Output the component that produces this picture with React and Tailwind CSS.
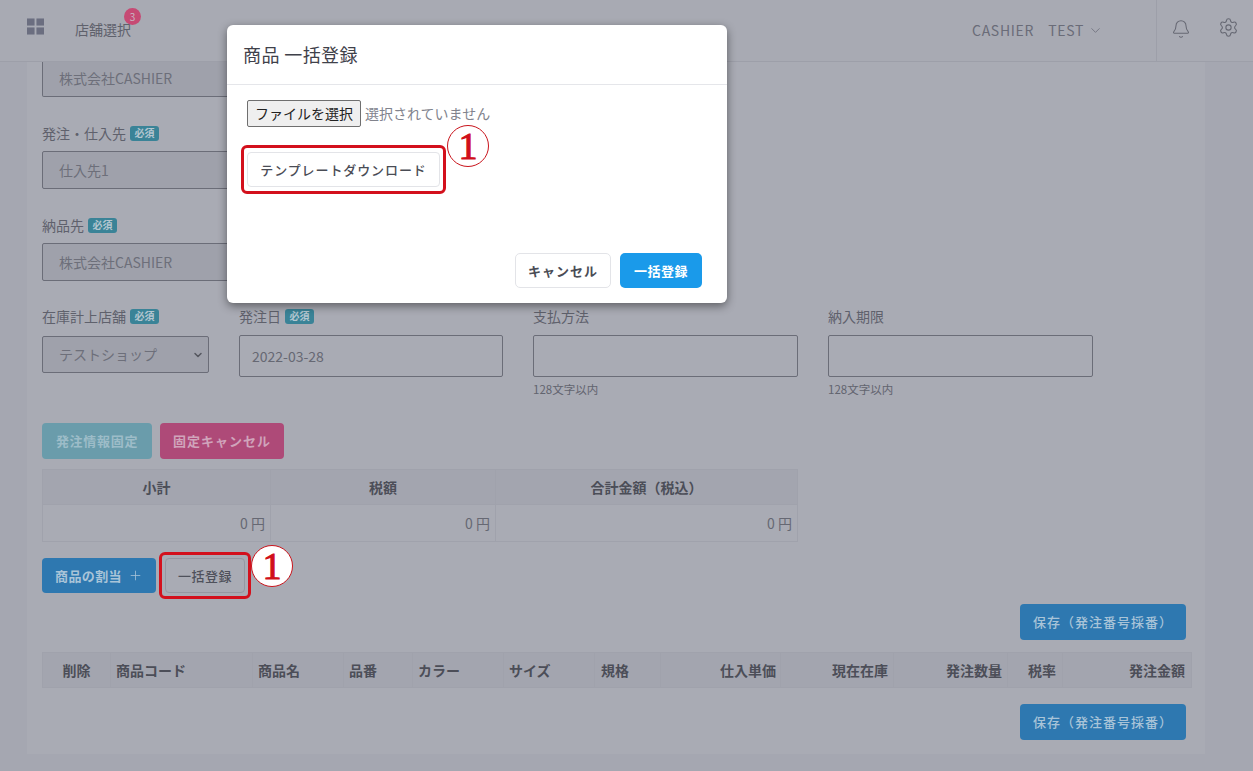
import React from 'react';
import { Bell, ChevronDown, Plus, Settings } from 'lucide-react';

const FONT = { fontFamily: '"Noto Sans CJK JP", "Noto Sans", sans-serif' };

const ORDER_COLUMNS = [
  { label: '削除', width: 'w-[68px]', align: 'text-center' },
  { label: '商品コード', width: 'w-[142px]', align: 'text-left' },
  { label: '商品名', width: 'w-[91px]', align: 'text-left' },
  { label: '品番', width: 'w-[69px]', align: 'text-left' },
  { label: 'カラー', width: 'w-[91px]', align: 'text-left' },
  { label: 'サイズ', width: 'w-[91px]', align: 'text-left' },
  { label: '規格', width: 'w-[66px]', align: 'text-left pl-[6px]' },
  { label: '仕入単価', width: 'w-[120px]', align: 'text-right pr-[4px]' },
  { label: '現在在庫', width: 'w-[113px]', align: 'text-right' },
  { label: '発注数量', width: 'w-[114px]', align: 'text-right' },
  { label: '税率', width: 'w-[55px]', align: 'text-left pl-[20px]' },
  { label: '発注金額', width: 'w-[129px]', align: 'text-right pr-[6px]' },
];

function Required() {
  return (
    <span className="ml-[4px] inline-flex h-[15px] w-[29px] items-center justify-center rounded-[3px] bg-[#3a8397] text-[10px] font-bold leading-none text-[#b4c6d0]">
      必須
    </span>
  );
}

function FieldLabel({ children, required }) {
  return (
    <div className="flex h-[20px] items-center text-[14px] leading-[20px] text-[#5f616c]">
      {children}
      {required && <Required />}
    </div>
  );
}

function LockedInput({ value, className = '' }) {
  return (
    <div className={`flex w-[420px] items-center rounded-[2px] border border-[#6b6d78] bg-[#9fa1ab] pl-[16px] text-[14px] text-[#6d6f7a] ${className}`}>
      {value}
    </div>
  );
}

function TextField({ label, required, value, hint, className = 'w-[265px]' }) {
  return (
    <div className={className}>
      <FieldLabel required={required}>{label}</FieldLabel>
      <div className="mt-[9px] flex h-[42px] items-center rounded-[2px] border border-[#6b6d78] pl-[12px] text-[14px] text-[#666873]">
        {value}
      </div>
      {hint && <div className="mt-[4px] text-[11.5px] leading-[16px] text-[#62646f]">{hint}</div>}
    </div>
  );
}

function SaveButton({ className = '' }) {
  return (
    <button className={`ml-auto mr-[19px] block h-[36px] w-[166px] rounded-[4px] bg-[#2e78b0] text-[13px] font-medium tracking-[1px] text-[#a9c4d8] ${className}`}>
      保存（発注番号採番）
    </button>
  );
}

// Numbered callout next to the highlighted controls
function StepMark({ className = '' }) {
  return (
    <div
      className={`absolute flex h-[42px] w-[42px] items-center justify-center rounded-full border-[1.5px] border-[#c9141c] bg-white text-[38px] leading-none text-[#d0101a] [-webkit-text-stroke:1px_#d0101a] ${className}`}
      style={{ fontFamily: '"Liberation Serif", serif' }}
    >
      1
    </div>
  );
}

function GridIcon() {
  return (
    <svg className="mb-[9px] ml-[1px] h-[17px] w-[17px]" viewBox="0 0 18 17" fill="#6b6e80">
      <rect x="0" y="0" width="8" height="7.5" />
      <rect x="10" y="0" width="8" height="7.5" />
      <rect x="0" y="9.5" width="8" height="7.5" />
      <rect x="10" y="9.5" width="8" height="7.5" />
    </svg>
  );
}

function BulkModal() {
  return (
    <div className="absolute left-[227px] top-[25px] h-[278px] w-[500px] rounded-[6px] bg-white shadow-[0_3px_10px_rgba(0,0,0,0.45)]">
      <div className="flex h-[60px] items-center border-b border-[#e5e6ea] pl-[16px] text-[18px] tracking-[0.4px] text-[#3f414a]">
        商品 一括登録
      </div>
      <div className="relative pl-[20px] pt-[15px]">
        <div className="flex items-center">
          <div className="flex h-[27px] w-[114px] items-center justify-center rounded-[2px] border border-[#6f6f6f] bg-[#efefef] text-[14px] text-[#222222]">
            ファイルを選択
          </div>
          <span className="ml-[4px] text-[14px] text-[#81838d]">選択されていません</span>
        </div>
        <div className="ml-[-6px] mt-[18px] flex h-[49px] w-[205px] items-center justify-center rounded-[6px] border-[3px] border-[#d3101c]">
          <button className="h-[35px] w-[193px] rounded-[4px] border border-[#e3e4e8] bg-white text-[13px] font-medium tracking-[0.9px] text-[#4a4c55]">
            テンプレートダウンロード
          </button>
        </div>
        <StepMark className="left-[220px] top-[40px]" />
      </div>
      <div className="absolute bottom-[15px] right-[25px] flex gap-[9px]">
        <button className="h-[35px] w-[96px] rounded-[5px] border border-[#e3e4e8] bg-white text-[13px] font-bold tracking-[1px] text-[#4a4c55]">
          キャンセル
        </button>
        <button className="h-[35px] w-[82px] rounded-[5px] bg-[#1a9aea] text-[13px] font-bold tracking-[0.5px] text-white">
          一括登録
        </button>
      </div>
    </div>
  );
}

export default function App() {
  return (
    <div className="relative h-[771px] overflow-hidden bg-[#a5a7b1]" style={FONT}>
      <header className="flex h-[62px] items-center border-b border-[#9d9fa9] bg-[#a8aab3] pl-[26px]">
        <GridIcon />
        <div className="relative ml-[31px] mt-[-3px] text-[14px] text-[#5f616c]">
          店舗選択
          <span className="absolute left-[49px] top-[-11px] flex h-[17px] w-[17px] items-center justify-center rounded-full bg-[#c64a74] text-[10px] text-[#c9b8c4]">
            3
          </span>
        </div>
        <div className="ml-auto flex items-center text-[14px] tracking-[0.7px] text-[#6a6c78]">
          CASHIER<span className="ml-[14px]">TEST</span>
          <ChevronDown className="ml-[4px] h-[15px] w-[15px]" strokeWidth={1.25} />
        </div>
        <div className="ml-[53px] flex h-[62px] w-[97px] items-center border-l border-[#9d9fa9] pl-[14px]">
          <Bell className="mb-[4px] h-[20px] w-[20px] text-[#666873]" strokeWidth={1.25} />
          <Settings className="mb-[6px] ml-[27px] h-[21px] w-[21px] text-[#666873]" strokeWidth={1.25} />
        </div>
      </header>

      <main className="ml-[27px] h-[692px] w-[1178px] bg-[#a9abb4] pl-[15px]">
        <LockedInput value="株式会社CASHIER" className="h-[35px] rounded-t-none border-t-0 pb-[1px]" />

        <div className="mt-[26px]">
          <FieldLabel required>発注・仕入先</FieldLabel>
          <LockedInput value="仕入先1" className="mt-[8px] h-[38px]" />
        </div>

        <div className="mt-[26px]">
          <FieldLabel required>納品先</FieldLabel>
          <LockedInput value="株式会社CASHIER" className="mt-[8px] h-[38px]" />
        </div>

        <div className="mt-[25px] flex gap-[30px]">
          <div className="w-[167px]">
            <FieldLabel required>在庫計上店舗</FieldLabel>
            <div className="mt-[10px] flex h-[37px] items-center justify-between rounded-[2px] border border-[#6b6d78] bg-[#9fa1ab] pl-[16px] pr-[4px] text-[14px] text-[#6d6f7a]">
              テストショップ
              <ChevronDown className="h-[12px] w-[12px] text-[#55575f]" strokeWidth={3} />
            </div>
          </div>
          <TextField label="発注日" required value="2022-03-28" className="w-[264px]" />
          <TextField label="支払方法" hint="128文字以内" />
          <TextField label="納入期限" hint="128文字以内" />
        </div>

        <div className="mt-[26px] flex gap-[8px]">
          <button className="h-[36px] w-[110px] rounded-[4px] bg-[#6a9cab] text-[13px] font-bold tracking-[0.7px] text-[#9dbcc8]">
            発注情報固定
          </button>
          <button className="h-[36px] w-[124px] rounded-[4px] bg-[#ae4a78] text-[13px] font-bold tracking-[1px] text-[#d0a4bb]">
            固定キャンセル
          </button>
        </div>

        <table className="mt-[10px] w-[756px] table-fixed border-collapse text-[14px]">
          <thead>
            <tr className="h-[35px] bg-[#a3a5af] font-bold text-[#4c4e58]">
              <th className="w-[228px] border border-[#a0a2ac]">小計</th>
              <th className="w-[225px] border border-[#a0a2ac]">税額</th>
              <th className="border border-[#a0a2ac]">合計金額（税込）</th>
            </tr>
          </thead>
          <tbody>
            <tr className="h-[37px] text-right text-[#666873]">
              <td className="border border-[#a0a2ac] pr-[5px]">0 円</td>
              <td className="border border-[#a0a2ac] pr-[5px]">0 円</td>
              <td className="border border-[#a0a2ac] pr-[5px]">0 円</td>
            </tr>
          </tbody>
        </table>

        <div className="relative mt-[16px] flex h-[35px] items-center">
          <button className="flex h-[35px] w-[114px] items-center justify-center rounded-[4px] bg-[#2e78b0] text-[13px] font-bold tracking-[0.4px] text-[#a9c4d8]">
            商品の割当
            <Plus className="ml-[6px] h-[15px] w-[15px]" strokeWidth={1.25} />
          </button>
          <div className="absolute left-[117px] top-[-6px] flex h-[47px] w-[92px] items-center justify-center rounded-[6px] border-[3px] border-[#d3101c]">
            <button className="h-[35px] w-[80px] rounded-[4px] border border-[#9597a1] text-[13px] font-medium tracking-[0.5px] text-[#4f515b]">
              一括登録
            </button>
          </div>
          <StepMark className="left-[209px] top-[-13px]" />
        </div>

        <SaveButton className="mt-[11px]" />

        <table className="mt-[12px] w-[1149px] table-fixed border-collapse text-[14px]">
          <thead>
            <tr className="h-[35px] bg-[#a3a5af] font-bold text-[#4c4e58]">
              {ORDER_COLUMNS.map((col) => (
                <th key={col.label} className={`${col.width} border border-[#a0a2ac] px-[5px] ${col.align}`}>
                  {col.label}
                </th>
              ))}
            </tr>
          </thead>
        </table>

        <SaveButton className="mt-[16px]" />
      </main>

      <BulkModal />
    </div>
  );
}
